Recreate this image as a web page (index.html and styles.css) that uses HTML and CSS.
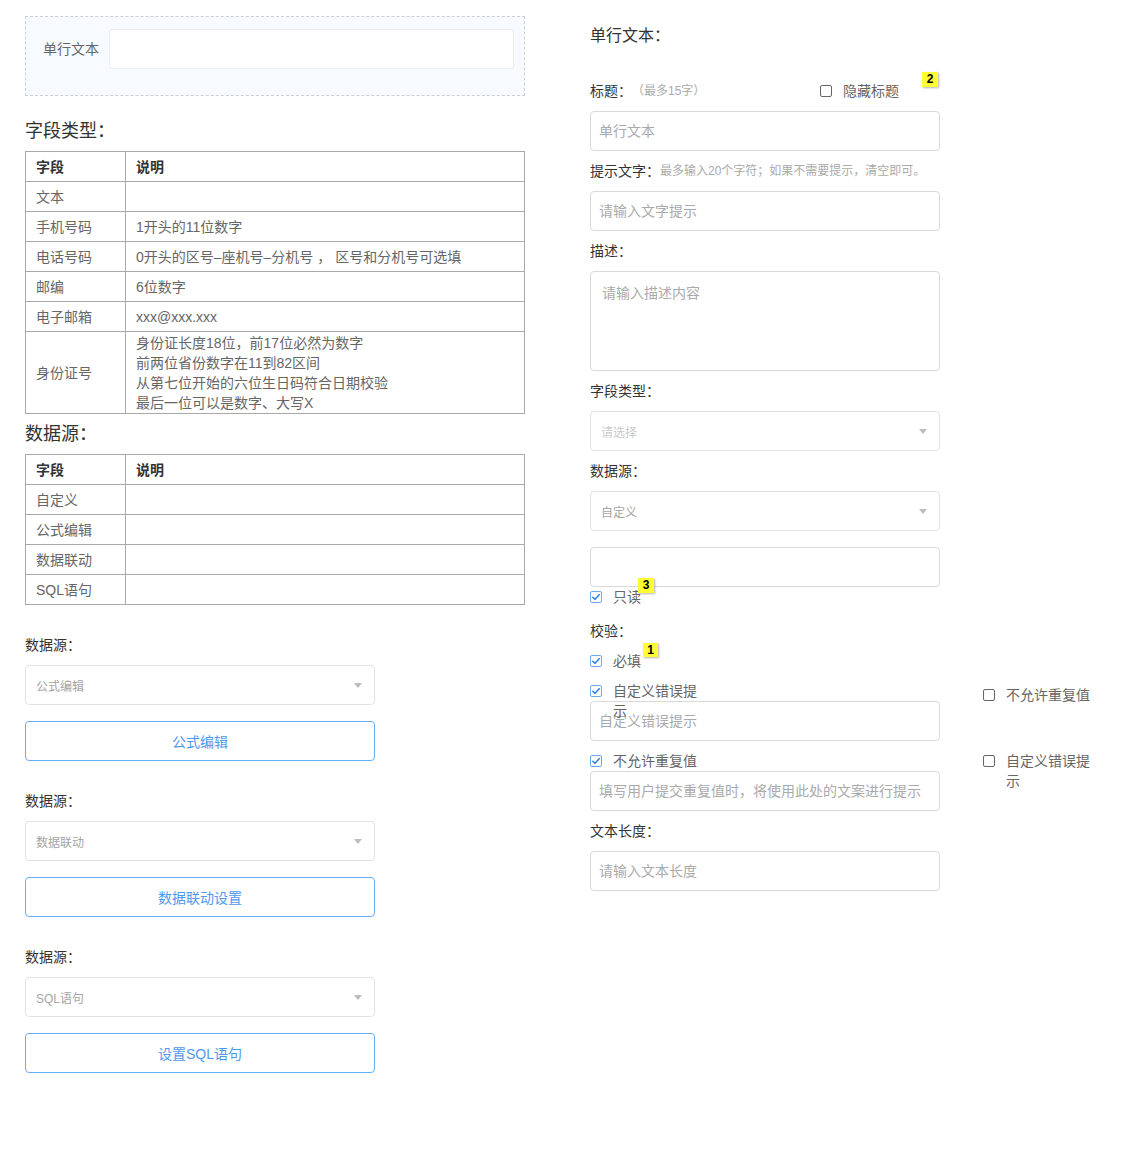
FILE: index.html
```html
<!DOCTYPE html>
<html lang="zh-CN">
<head>
<meta charset="utf-8">
<title>单行文本</title>
<link rel="stylesheet" href="styles.css">
</head>
<body>
<div class="page">
  <div class="left">
    <div class="preview">
      <span class="preview-label">单行文本</span>
      <input class="preview-input" type="text">
    </div>

    <h2 class="section-title">字段类型：</h2>
    <table class="doc-table">
      <colgroup><col class="col-name"><col></colgroup>
      <thead>
        <tr><th>字段</th><th>说明</th></tr>
      </thead>
      <tbody>
        <tr><td>文本</td><td></td></tr>
        <tr><td>手机号码</td><td>1开头的11位数字</td></tr>
        <tr><td>电话号码</td><td>0开头的区号–座机号–分机号 ， 区号和分机号可选填</td></tr>
        <tr><td>邮编</td><td>6位数字</td></tr>
        <tr><td>电子邮箱</td><td>xxx@xxx.xxx</td></tr>
        <tr><td class="multi">身份证号</td><td class="multi">身份证长度18位，前17位必然为数字<br>前两位省份数字在11到82区间<br>从第七位开始的六位生日码符合日期校验<br>最后一位可以是数字、大写X</td></tr>
      </tbody>
    </table>

    <h2 class="section-title tight">数据源：</h2>
    <table class="doc-table">
      <colgroup><col class="col-name"><col></colgroup>
      <thead>
        <tr><th>字段</th><th>说明</th></tr>
      </thead>
      <tbody>
        <tr><td>自定义</td><td></td></tr>
        <tr><td>公式编辑</td><td></td></tr>
        <tr><td>数据联动</td><td></td></tr>
        <tr><td>SQL语句</td><td></td></tr>
      </tbody>
    </table>

    <div class="source-group">
      <div class="field-label">数据源：</div>
      <div class="select select-left"><span class="select-value">公式编辑</span><span class="caret"></span></div>
      <button class="btn-outline" type="button">公式编辑</button>
    </div>

    <div class="source-group">
      <div class="field-label">数据源：</div>
      <div class="select select-left"><span class="select-value">数据联动</span><span class="caret"></span></div>
      <button class="btn-outline" type="button">数据联动设置</button>
    </div>

    <div class="source-group">
      <div class="field-label">数据源：</div>
      <div class="select select-left"><span class="select-value">SQL语句</span><span class="caret"></span></div>
      <button class="btn-outline" type="button">设置SQL语句</button>
    </div>
  </div>

  <div class="right">
    <div class="form-col">
      <h3 class="form-title">单行文本：</h3>

      <div class="field-label title-row">
        <span>标题：</span><span class="hint">（最多15字）</span>
        <label class="check hide-title">
          <span class="box"></span><span class="check-text">隐藏标题</span>
        </label>
        <span class="badge badge-2">2</span>
      </div>
      <input class="input" type="text" placeholder="单行文本">

      <div class="field-label"><span>提示文字：</span><span class="hint">最多输入20个字符；如果不需要提示，清空即可。</span></div>
      <input class="input" type="text" placeholder="请输入文字提示">

      <div class="field-label">描述：</div>
      <textarea class="textarea" placeholder="请输入描述内容"></textarea>

      <div class="field-label">字段类型：</div>
      <div class="select"><span class="select-value empty">请选择</span><span class="caret"></span></div>

      <div class="field-label">数据源：</div>
      <div class="select"><span class="select-value">自定义</span><span class="caret"></span></div>

      <input class="input input-gap" type="text">
      <label class="check row-check">
        <span class="box checked"><svg viewBox="0 0 12 12" width="10" height="10"><path d="M2.2 6.3 L4.9 8.8 L9.8 3.2" fill="none" stroke="#2f86e6" stroke-width="1.9" stroke-linecap="round" stroke-linejoin="round"/></svg></span>
        <span class="check-text">只读</span>
        <span class="badge badge-3">3</span>
      </label>

      <div class="field-label label-gap">校验：</div>
      <label class="check row-check spaced">
        <span class="box checked"><svg viewBox="0 0 12 12" width="10" height="10"><path d="M2.2 6.3 L4.9 8.8 L9.8 3.2" fill="none" stroke="#2f86e6" stroke-width="1.9" stroke-linecap="round" stroke-linejoin="round"/></svg></span>
        <span class="check-text">必填</span>
        <span class="badge badge-1">1</span>
      </label>
    </div>

    <div class="validation">
      <div class="val-main">
        <label class="check row-check">
          <span class="box checked"><svg viewBox="0 0 12 12" width="10" height="10"><path d="M2.2 6.3 L4.9 8.8 L9.8 3.2" fill="none" stroke="#2f86e6" stroke-width="1.9" stroke-linecap="round" stroke-linejoin="round"/></svg></span>
          <span class="check-text">自定义错误提示</span>
        </label>
        <input class="input flush" type="text" placeholder="自定义错误提示">
        <label class="check row-check spaced">
          <span class="box checked"><svg viewBox="0 0 12 12" width="10" height="10"><path d="M2.2 6.3 L4.9 8.8 L9.8 3.2" fill="none" stroke="#2f86e6" stroke-width="1.9" stroke-linecap="round" stroke-linejoin="round"/></svg></span>
          <span class="check-text">不允许重复值</span>
        </label>
        <input class="input flush" type="text" placeholder="填写用户提交重复值时，将使用此处的文案进行提示">
      </div>
      <div class="val-side">
        <label class="check side-first">
          <span class="box"></span><span class="check-text">不允许重复值</span>
        </label>
        <label class="check side-second">
          <span class="box"></span><span class="check-text">自定义错误提示</span>
        </label>
      </div>
    </div>

    <div class="form-col">
      <div class="field-label">文本长度：</div>
      <input class="input" type="text" placeholder="请输入文本长度">
    </div>
  </div>
</div>
</body>
</html>
```

FILE: styles.css
```css
* {
  box-sizing: border-box;
}

body {
  margin: 0;
  background: #fff;
  color: #333;
  font-family: "Liberation Sans", "Noto Sans CJK SC", sans-serif;
  font-size: 14px;
}

.page {
  display: flex;
  align-items: flex-start;
  padding-left: 25px;
}

/* ---------- left column ---------- */
.left {
  width: 500px;
  padding-top: 16px;
}

.preview {
  display: flex;
  align-items: flex-start;
  padding: 12px 10px 26px 17px;
  border: 1px dashed #cfcfcf;
  background: #f7fbff;
}

.preview-label {
  flex: none;
  width: 66px;
  color: #666;
  font-size: 14px;
  line-height: 40px;
}

.preview-input {
  flex: 1;
  height: 40px;
  border: 1px solid #ececec;
  border-radius: 3px;
  background: #fff;
  outline: none;
}

.section-title {
  margin: 23px 0 8px;
  font-size: 18px;
  font-weight: normal;
  line-height: 24px;
  color: #333;
}

.section-title.tight {
  margin-top: 8px;
}

.doc-table {
  width: 100%;
  border-collapse: collapse;
  font-size: 14px;
  color: #666;
}

.col-name {
  width: 100px;
}

.doc-table th,
.doc-table td {
  padding: 5px 10px 4px;
  border: 1px solid #a9a9a9;
  line-height: 20px;
  text-align: left;
  vertical-align: middle;
}

.doc-table th {
  color: #333;
  font-weight: bold;
}

.doc-table td.multi {
  padding: 1px 10px 0;
}

.source-group {
  margin-top: 30px;
}

.field-label {
  display: flex;
  align-items: center;
  height: 20px;
  margin-top: 10px;
  font-size: 14px;
  line-height: 20px;
  color: #333;
}

.source-group .field-label {
  margin-top: 0;
}

.select {
  display: flex;
  align-items: center;
  justify-content: space-between;
  width: 350px;
  height: 40px;
  margin-top: 10px;
  padding: 0 12px 0 10px;
  border: 1px solid #e2e2e2;
  border-radius: 4px;
  background: #fff;
}

.select-value {
  font-size: 12px;
  color: #a5a5a5;
}

.select-value.empty {
  color: #cacaca;
}

.caret {
  width: 0;
  height: 0;
  border-left: 4px solid transparent;
  border-right: 4px solid transparent;
  border-top: 5px solid #bdbdbd;
}

.btn-outline {
  display: block;
  width: 350px;
  height: 40px;
  margin-top: 16px;
  border: 1px solid #6aaef7;
  border-radius: 4px;
  background: #fff;
  color: #4f98ee;
  font-family: inherit;
  font-size: 14px;
  cursor: pointer;
}

/* ---------- right column ---------- */
.right {
  width: 503px;
  margin-left: 65px;
}

.form-col {
  width: 350px;
}

.form-title {
  margin: 26px 0 35px;
  font-size: 16px;
  font-weight: normal;
  line-height: 20px;
  color: #333;
}

.form-title + .field-label {
  margin-top: 0;
}

.title-row {
  position: relative;
}

.hint {
  font-size: 12px;
  color: #aaa;
}

.input {
  display: block;
  width: 350px;
  height: 40px;
  margin-top: 10px;
  padding: 0 8px;
  border: 1px solid #d9d9d9;
  border-radius: 4px;
  background: transparent;
  font-family: inherit;
  font-size: 14px;
  color: #333;
  outline: none;
}

.input::placeholder,
.textarea::placeholder {
  color: #aaa;
}

.input.flush {
  margin-top: 0;
}

.input-gap {
  margin-top: 16px;
}

.textarea {
  display: block;
  width: 350px;
  height: 100px;
  margin-top: 10px;
  padding: 11px 11px;
  border: 1px solid #d9d9d9;
  border-radius: 4px;
  font-family: inherit;
  font-size: 14px;
  line-height: 20px;
  resize: none;
  outline: none;
}

.label-gap {
  margin-top: 14px;
}

/* checkbox */
.check {
  position: relative;
  display: flex;
  align-items: flex-start;
  height: 20px;
  color: #666;
  font-size: 14px;
  line-height: 20px;
  cursor: pointer;
}

.box {
  flex: none;
  display: flex;
  align-items: center;
  justify-content: center;
  width: 12px;
  height: 12px;
  margin-top: 4px;
  margin-right: 11px;
  border: 1px solid #666;
  border-radius: 2px;
  background: #fff;
}

.box.checked {
  border-color: #6aaaf3;
}

.check-text {
  max-width: 90px;
}

.row-check.spaced {
  margin-top: 10px;
}

.hide-title {
  margin-left: auto;
  margin-right: 41px;
}

.badge {
  position: absolute;
  width: 16px;
  height: 15px;
  background: #ffff33;
  box-shadow: 1px 1px 2px rgba(0, 0, 0, 0.3);
  color: #000;
  font-family: "Liberation Sans", sans-serif;
  font-size: 12px;
  font-weight: bold;
  line-height: 15px;
  text-align: center;
}

.badge-2 {
  left: 332px;
  top: -9px;
}

.badge-3 {
  left: 48px;
  top: -9px;
}

.badge-1 {
  left: 53px;
  top: -8px;
  width: 15px;
  height: 14px;
  line-height: 14px;
}

.validation {
  display: grid;
  grid-template-columns: 350px 110px;
  column-gap: 43px;
  margin-top: 10px;
}

.side-first {
  margin-top: 4px;
}

.side-second {
  margin-top: 46px;
}
```
